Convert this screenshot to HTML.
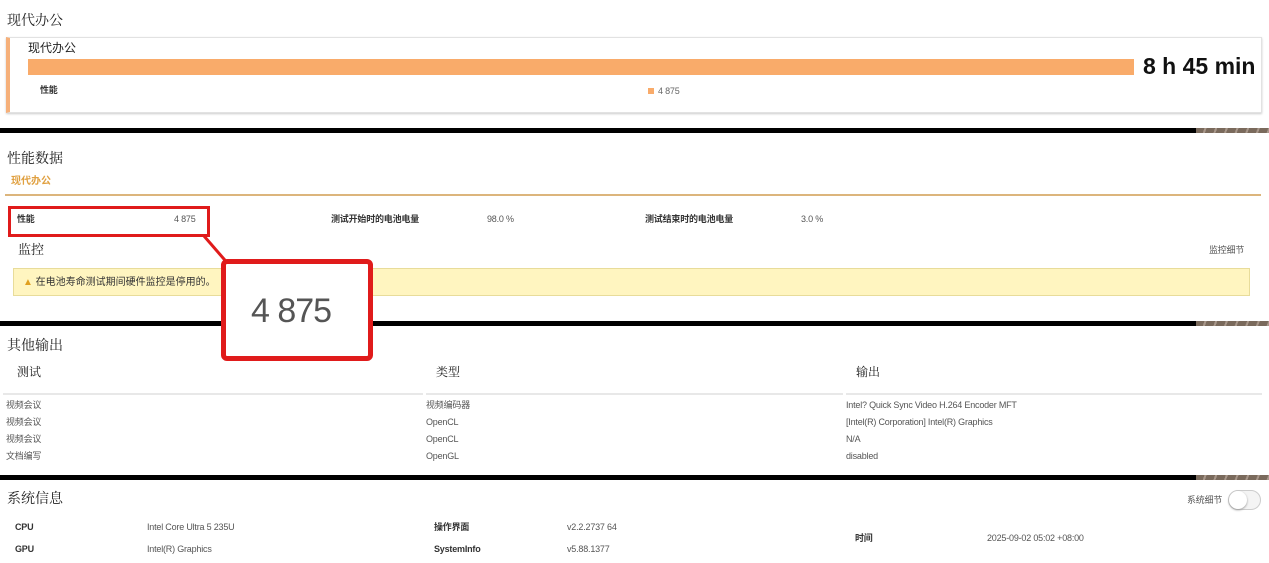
<!DOCTYPE html>
<html><head><meta charset="utf-8"><style>
*{margin:0;padding:0;box-sizing:border-box}
body{width:1269px;height:563px;background:#fff;position:relative;overflow:hidden;font-family:"Liberation Sans","Noto Sans CJK SC",sans-serif;color:#333}
.a{position:absolute;white-space:nowrap;line-height:1}
.h{font-family:"Noto Serif CJK SC","Liberation Serif",serif;font-size:14px;color:#222}
.s{font-size:9px;color:#555;letter-spacing:-0.2px}
.b{font-weight:bold;color:#333}
.band{position:absolute;left:0;width:1269px;height:5px;background:#000}
.band i{position:absolute;right:0;top:0;width:73px;height:5px;background:repeating-linear-gradient(110deg,#7a6a5c 0 8px,#a8978a 8px 10px)}
</style></head><body>
<div class="a h" style="left:7px;top:13px">现代办公</div>
<div class="a" style="left:6px;top:37px;width:1256px;height:76px;border:1px solid #e2e2e2;border-left:4px solid #f6b07a;box-shadow:0 1px 2px #ccc"></div>
<div class="a" style="left:28px;top:42px;font-size:12px;color:#222">现代办公</div>
<div class="a" style="left:28px;top:59px;width:1106px;height:16px;background:#f9ab6a"></div>
<div class="a" style="left:1143px;top:55px;font-size:23px;font-weight:bold;color:#111">8 h 45 min</div>
<div class="a s b" style="left:40px;top:86px">性能</div>
<div class="a" style="left:648px;top:88px;width:6px;height:6px;background:#f9ab6a"></div>
<div class="a s" style="left:658px;top:87px;color:#666">4 875</div>
<div class="band" style="top:128px"><i></i></div>

<div class="a h" style="left:7px;top:151px">性能数据</div>
<div class="a" style="left:11px;top:177px;font-size:10px;font-weight:bold;color:#e0a040">现代办公</div>
<div class="a" style="left:5px;top:194px;width:1256px;height:2px;background:#dcb57c"></div>
<div class="a s b" style="left:17px;top:215px">性能</div>
<div class="a s" style="left:174px;top:215px">4 875</div>
<div class="a s b" style="left:331px;top:215px">测试开始时的电池电量</div>
<div class="a s" style="left:487px;top:215px">98.0 %</div>
<div class="a s b" style="left:645px;top:215px">测试结束时的电池电量</div>
<div class="a s" style="left:801px;top:215px">3.0 %</div>
<div class="a" style="left:8px;top:206px;width:202px;height:31px;border:3px solid #e01b1b"></div>
<div class="a h" style="left:18px;top:242px;font-size:13px">监控</div>
<div class="a s" style="left:1209px;top:246px">监控细节</div>
<div class="a" style="left:13px;top:268px;width:1237px;height:28px;background:#fff5c0;border:1px solid #e8dc9a"></div>
<div class="a" style="left:23px;top:278px;font-size:10px;color:#333"><span style="color:#e0a020">▲</span> 在电池寿命测试期间硬件监控是停用的。</div>
<svg class="a" style="left:200px;top:232px" width="40" height="40"><line x1="4" y1="4" x2="30" y2="34" stroke="#e01b1b" stroke-width="3"/></svg>
<div class="band" style="top:321px"><i></i></div>
<div class="a" style="left:221px;top:259px;width:152px;height:102px;border:5px solid #e01b1b;border-radius:6px;background:#fff"></div>
<div class="a" style="left:251px;top:294px;font-size:34px;color:#555;letter-spacing:-1px">4 875</div>

<div class="a h" style="left:7px;top:338px">其他输出</div>
<div class="a h" style="left:17px;top:366px;font-size:12px">测试</div>
<div class="a h" style="left:436px;top:366px;font-size:12px">类型</div>
<div class="a h" style="left:856px;top:366px;font-size:12px">输出</div>
<div class="a" style="left:3px;top:393px;width:420px;height:2px;background:#e8e8e8"></div>
<div class="a" style="left:426px;top:393px;width:417px;height:2px;background:#e8e8e8"></div>
<div class="a" style="left:846px;top:393px;width:416px;height:2px;background:#e8e8e8"></div>
<div class="a s" style="left:6px;top:401px">视频会议</div><div class="a s" style="left:426px;top:401px">视频编码器</div><div class="a s" style="left:846px;top:401px">Intel? Quick Sync Video H.264 Encoder MFT</div>
<div class="a s" style="left:6px;top:418px">视频会议</div><div class="a s" style="left:426px;top:418px">OpenCL</div><div class="a s" style="left:846px;top:418px">[Intel(R) Corporation] Intel(R) Graphics</div>
<div class="a s" style="left:6px;top:435px">视频会议</div><div class="a s" style="left:426px;top:435px">OpenCL</div><div class="a s" style="left:846px;top:435px">N/A</div>
<div class="a s" style="left:6px;top:452px">文档编写</div><div class="a s" style="left:426px;top:452px">OpenGL</div><div class="a s" style="left:846px;top:452px">disabled</div>
<div class="band" style="top:475px"><i></i></div>

<div class="a h" style="left:7px;top:491px">系统信息</div>
<div class="a s" style="left:1187px;top:496px">系统细节</div>
<div class="a" style="left:1228px;top:490px;width:33px;height:20px;border:1px solid #ccc;border-radius:10px;background:#f4f4f4"></div>
<div class="a" style="left:1229px;top:491px;width:18px;height:18px;border-radius:50%;background:#fff;box-shadow:0 1px 2px #999"></div>
<div class="a s b" style="left:15px;top:523px">CPU</div><div class="a s" style="left:147px;top:523px">Intel Core Ultra 5 235U</div>
<div class="a s b" style="left:434px;top:523px">操作界面</div><div class="a s" style="left:567px;top:523px">v2.2.2737 64</div>
<div class="a s b" style="left:15px;top:545px">GPU</div><div class="a s" style="left:147px;top:545px">Intel(R) Graphics</div>
<div class="a s b" style="left:434px;top:545px">SystemInfo</div><div class="a s" style="left:567px;top:545px">v5.88.1377</div>
<div class="a s b" style="left:855px;top:534px">时间</div><div class="a s" style="left:987px;top:534px">2025-09-02 05:02 +08:00</div>
</body></html>
